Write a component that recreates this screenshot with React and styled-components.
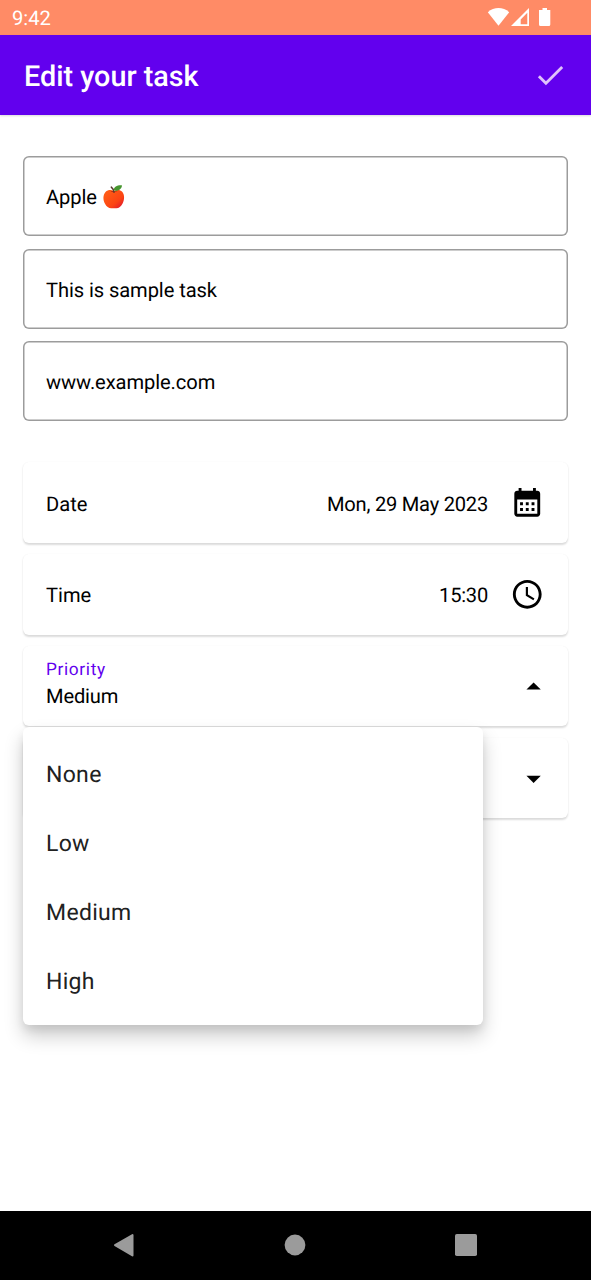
import React from "react";
import styled, { createGlobalStyle } from "styled-components";

const Global = createGlobalStyle`
  * { box-sizing: border-box; }
  body { margin: 0; background: #fff; font-family: Roboto, "Liberation Sans", sans-serif; color: #000; text-rendering: geometricPrecision; }
  svg { display: block; flex: none; }
`;

const Screen = styled.div`
  display: flex;
  flex-direction: column;
  width: 591px;
  height: 1280px;
  background: #fff;
  overflow: hidden;
`;

const StatusBar = styled.div`
  display: flex;
  justify-content: space-between;
  height: 35px;
  padding: 0 40px 0 12px;
  background: #ff8b66;
  color: #fff;
  font-size: 20.2px;
  line-height: 37px;
`;

const StatusIcons = styled.svg`
  width: 64px;
  height: 20px;
  margin-top: 7px;
`;

const AppBar = styled.header`
  position: relative;
  display: flex;
  align-items: center;
  justify-content: space-between;
  height: 80px;
  flex: none;
  padding: 0 23.5px 0 24px;
  background: #6200ee;
  box-shadow: 0 1px 2px rgba(0, 0, 0, 0.15);
`;

const Title = styled.h1`
  margin: 3px 0 0;
  color: #fff;
  font-size: 28.75px;
  line-height: 34px;
  font-weight: 500;
`;

const Content = styled.main`
  flex: 1;
  padding: 41px 23px 0;
`;

const Fields = styled.section`
  display: flex;
  flex-direction: column;
  gap: 12.5px;
`;

const Field = styled.div`
  display: flex;
  align-items: center;
  height: 80px;
  padding: 2px 23px 0;
  border-radius: 6px;
  box-shadow: inset 0 0 0 1.5px #9c9c9c;
  font-size: 20.125px;
  letter-spacing: -0.08px;
`;

const Apple = styled.svg`
  width: 24px;
  height: 24px;
  margin: -1px 0 0 5px;
`;

const Cards = styled.section`
  display: flex;
  flex-direction: column;
  gap: 11.3px;
  margin-top: 41.3px;
`;

const Card = styled.div`
  position: relative;
  display: flex;
  align-items: center;
  height: 80.5px;
  padding: 0 23.5px 0 23px;
  border-radius: 6px;
  font-size: 20.125px;
  box-shadow: 0 1.5px 2px rgba(0, 0, 0, 0.14), 0 0 1px rgba(0, 0, 0, 0.04);
  z-index: ${(p) => (p.$open ? 2 : "auto")};
`;

const Label = styled.span`
  flex: 1;
  padding-top: 2px;
`;

const Value = styled.span`
  margin-right: 22px;
  padding-top: 2px;
  letter-spacing: -0.23px;
`;

const Selected = styled.div`
  flex: 1;
  display: flex;
  flex-direction: column;
  padding-bottom: 4px;
`;

const Caption = styled.span`
  color: #6200ee;
  font-size: 17.25px;
  line-height: 25px;
  letter-spacing: 0.65px;
`;

const Current = styled.span`
  line-height: 27px;
  letter-spacing: -0.15px;
`;

const Menu = styled.ul`
  position: absolute;
  top: 81px;
  left: 0;
  width: 459.5px;
  margin: 0;
  padding: 11.5px 0;
  list-style: none;
  background: #fff;
  border-radius: 6px;
  box-shadow: 0 11px 19px rgba(0, 0, 0, 0.2), 0 5px 8px rgba(0, 0, 0, 0.07);
`;

const MenuItem = styled.li`
  display: flex;
  align-items: center;
  height: 68.9px;
  padding: 3px 23px 0;
  color: #212121;
  font-size: 23px;
  letter-spacing: 0.3px;
`;

const NavBar = styled.nav`
  display: flex;
  justify-content: center;
  flex: none;
  height: 69px;
  padding: 0 1px 1px 0;
  background: #000;
`;

const NavKey = styled.div`
  display: flex;
  align-items: center;
  justify-content: center;
  width: 170.5px;
`;

const Icon = ({ d, size = 34.5 }) => (
  <svg width={size} height={size} viewBox="0 0 24 24" fill="currentColor">
    <path d={d} />
  </svg>
);

const CALENDAR =
  "M19 4h-1V2h-2v2H8V2H6v2H5c-1.11 0-1.99.9-1.99 2L3 20c0 1.1.89 2 2 2h14c1.1 0 2-.9 2-2V6c0-1.1-.9-2-2-2zm0 16H5V10h14v10zM9 14H7v-2h2v2zm4 0h-2v-2h2v2zm4 0h-2v-2h2v2zm-8 4H7v-2h2v2zm4 0h-2v-2h2v2zm4 0h-2v-2h2v2z";
const CLOCK =
  "M11.99 2C6.47 2 2 6.48 2 12s4.47 10 9.99 10C17.52 22 22 17.52 22 12S17.52 2 11.99 2zM12 20c-4.42 0-8-3.58-8-8s3.58-8 8-8 8 3.58 8 8-3.58 8-8 8zm.5-13H11v6l5.25 3.15.75-1.23-4.5-2.67z";
const CHECK = "M9 16.17L4.83 12l-1.42 1.41L9 19 21 7l-1.41-1.41z";

const Arrow = ({ up }) => (
  <svg width="21.5" height="34.5" viewBox="0 0 15 24">
    <path d={up ? "M2.4 14.3l5-5 5 5z" : "M2.4 10.3l5 5 5-5z"} />
  </svg>
);

const AppleIcon = () => (
  <Apple viewBox="0 0 24 24">
    <defs>
      <linearGradient id="skin" x1="0" y1="0" x2="1" y2="1">
        <stop offset="0.2" stopColor="#ff5a16" />
        <stop offset="0.65" stopColor="#fb4313" />
        <stop offset="1" stopColor="#d80b35" />
      </linearGradient>
    </defs>
    <path
      fill="url(#skin)"
      d="M12 5.9C14.6 4.700 18 4.400 20.200 6.700c2.500 2.700 2.400 8 .4 11.700-1.500 2.900-3.800 4.900-6.200 4.900-1.200 0-1.400-.1-2.500-.1s-1.500.1-2.700.1c-2.500 0-4.800-1.700-6.200-4.500C.8 14.900.9 9.800 3.500 7 5.900 4.600 9.300 4.700 12 5.900z"
    />
    <path fill="#b52b12" d="M8.500 6.200c2 1.300 5 1.300 7-.2-1.300-.2-2.400 0-3.500.5-1.200-.5-2.300-.6-3.500-.3z" />
    <path d="M12 7.300C11.800 5 10.700 3.200 9.300 2.100" fill="none" stroke="#58392e" strokeWidth="1.5" strokeLinecap="round" />
    <path fill="#46962f" d="M11.600 5.300C12 1.800 15 .1 20 .4c-.5 4-4.200 6.100-8.400 4.900z" />
  </Apple>
);

const OPTIONS = ["None", "Low", "Medium", "High"];

export default function App() {
  return (
    <Screen>
      <Global />
      <StatusBar>
        <span>9:42</span>
        <StatusIcons viewBox="0 0 64 20" fill="#fff">
          <path d="M0.8 5.3C7 -0.3 16 -0.3 22.2 5.3L11.5 18.8z" />
          <path fillRule="evenodd" d="M24 19L42 1V19zM33.7 12.4V17.2H40.3V5.8z" />
          <path d="M55.5 1h4.5v2H63.300v14.500a1.500 1.500 0 0 1-1.500 1.500H53.500a1.500 1.500 0 0 1-1.500-1.500V3H55.500z" />
        </StatusIcons>
      </StatusBar>
      <AppBar>
        <Title>Edit your task</Title>
        <svg width="34.5" height="34.5" viewBox="0 0 24 24" fill="#e0c2fb">
          <path d={CHECK} />
        </svg>
      </AppBar>
      <Content>
        <Fields>
          <Field>
            Apple <AppleIcon />
          </Field>
          <Field>This is sample task</Field>
          <Field>www.example.com</Field>
        </Fields>
        <Cards>
          <Card>
            <Label>Date</Label>
            <Value>Mon, 29 May 2023</Value>
            <Icon d={CALENDAR} />
          </Card>
          <Card>
            <Label>Time</Label>
            <Value>15:30</Value>
            <Icon d={CLOCK} />
          </Card>
          <Card $open>
            <Selected>
              <Caption>Priority</Caption>
              <Current>Medium</Current>
            </Selected>
            <Arrow up />
            <Menu>
              {OPTIONS.map((o) => (
                <MenuItem key={o}>{o}</MenuItem>
              ))}
            </Menu>
          </Card>
          <Card>
            <Label />
            <Arrow />
          </Card>
        </Cards>
      </Content>
      <NavBar>
        <NavKey>
          <svg width="24" height="26" viewBox="0 0 24 26">
            <path d="M2 13.1L19.500 3.100V23.500z" fill="#9b9b9b" stroke="#9b9b9b" strokeWidth="2" strokeLinejoin="round" />
          </svg>
        </NavKey>
        <NavKey>
          <svg width="22" height="22" viewBox="0 0 22 22">
            <circle cx="11" cy="11" r="10.4" fill="#9b9b9b" />
          </svg>
        </NavKey>
        <NavKey>
          <svg width="22" height="22" viewBox="0 0 22 22">
            <rect width="22" height="22" rx="1.8" fill="#9b9b9b" />
          </svg>
        </NavKey>
      </NavBar>
    </Screen>
  );
}
